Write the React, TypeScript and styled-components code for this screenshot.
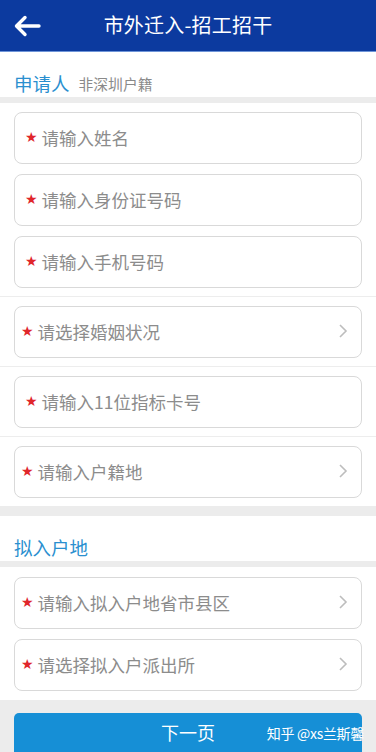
import React from 'react'
import styled, { createGlobalStyle } from 'styled-components'

const GlobalStyle = createGlobalStyle`
  html, body {
    margin: 0;
    padding: 0;
    background: #ffffff;
  }
  body {
    font-family: "Noto Sans CJK SC", "Noto Sans", sans-serif;
  }
`

const Page = styled.div`
  width: 376px;
  height: 752px;
  overflow: hidden;
  display: flex;
  flex-direction: column;
  background: #ffffff;
`

const Header = styled.header`
  position: relative;
  height: 51px;
  flex-shrink: 0;
  display: flex;
  align-items: center;
  justify-content: center;
  background: #0c3a9f;
  border-bottom: 1px solid #6f95d8;
`

const BackButton = styled.button`
  position: absolute;
  left: 12px;
  top: 12px;
  width: 30px;
  height: 28px;
  padding: 0;
  border: 0;
  background: none;
  display: flex;
  align-items: center;
  justify-content: center;
`

const Title = styled.h1`
  margin: 0 0 2px;
  color: #ffffff;
  font-size: 20px;
  font-weight: normal;
  letter-spacing: 0.2px;
`

const SectionTitle = styled.div`
  height: 45px;
  box-sizing: border-box;
  padding: 17px 14px 0;
  display: flex;
  align-items: center;
  gap: 9px;
`

const SectionName = styled.span`
  color: #2a8fcf;
  font-size: 18.5px;
`

const SectionNote = styled.span`
  color: #8a8a8a;
  font-size: 14.8px;
`

const Band = styled.div<{ $h: number }>`
  height: ${(p) => p.$h}px;
  flex-shrink: 0;
  background: #ececec;
`

const Group = styled.div<{ $top: number; $bottom: number; $line?: boolean }>`
  display: flex;
  flex-direction: column;
  gap: 10px;
  padding: ${(p) => p.$top}px 14px ${(p) => p.$bottom}px;
  border-bottom: ${(p) => (p.$line ? '1px solid #ededed' : 'none')};
`

const Field = styled.div<{ $select?: boolean }>`
  height: 52px;
  box-sizing: border-box;
  border: 1px solid #d9d9d9;
  border-radius: 8px;
  display: flex;
  align-items: center;
  padding: 0 13px 2px ${(p) => (p.$select ? '6px' : '10px')};
  background: #ffffff;
`

const Star = styled.span`
  color: #e0262b;
  font-size: 14px;
  line-height: 1;
  margin-right: 4px;
  font-family: "DejaVu Sans", sans-serif;
`

const Placeholder = styled.span`
  flex: 1;
  color: #8c8c8c;
  font-size: 17.5px;
`

const Footer = styled.div`
  flex: 1;
  background: #ececec;
  padding: 13px 14px 0;
  display: flex;
`

const NextButton = styled.button`
  position: relative;
  flex: 1;
  border: 0;
  border-radius: 5px 5px 0 0;
  background: #168fd6;
  color: #ffffff;
  font-family: inherit;
  font-size: 18px;
  padding: 0 0 2px;
`

const Watermark = styled.span`
  position: absolute;
  right: -2px;
  top: 10px;
  font-size: 14px;
  color: #ffffff;
  letter-spacing: -0.3px;
`

const Chevron = () => (
  <svg width="10" height="16" viewBox="0 0 10 16">
    <path d="M2 2 L8 8 L2 14" fill="none" stroke="#bdbdbd" strokeWidth="1.6" />
  </svg>
)

const BackArrow = () => (
  <svg width="28" height="22" viewBox="0 0 28 22">
    <path
      d="M26 11 H4 M12 2.5 L3.5 11 L12 19.5"
      fill="none"
      stroke="#ffffff"
      strokeWidth="3.4"
      strokeLinecap="round"
      strokeLinejoin="round"
    />
  </svg>
)

interface FieldProps {
  text: string
  select?: boolean
}

const FormField = ({ text, select }: FieldProps) => (
  <Field $select={select}>
    <Star>★</Star>
    <Placeholder>{text}</Placeholder>
    {select && <Chevron />}
  </Field>
)

const App = () => (
  <Page>
    <GlobalStyle />
    <Header>
      <BackButton aria-label="返回">
        <BackArrow />
      </BackButton>
      <Title>市外迁入-招工招干</Title>
    </Header>

    <SectionTitle>
      <SectionName>申请人</SectionName>
      <SectionNote>非深圳户籍</SectionNote>
    </SectionTitle>
    <Band $h={6} />

    <Group $top={9} $bottom={8} $line>
      <FormField text="请输入姓名" />
      <FormField text="请输入身份证号码" />
      <FormField text="请输入手机号码" />
    </Group>
    <Group $top={9} $bottom={8} $line>
      <FormField text="请选择婚姻状况" select />
    </Group>
    <Group $top={9} $bottom={8} $line>
      <FormField text="请输入11位指标卡号" />
    </Group>
    <Group $top={9} $bottom={8}>
      <FormField text="请输入户籍地" select />
    </Group>
    <Band $h={10} />

    <SectionTitle>
      <SectionName>拟入户地</SectionName>
    </SectionTitle>
    <Band $h={6} />

    <Group $top={10} $bottom={9}>
      <FormField text="请输入拟入户地省市县区" select />
      <FormField text="请选择拟入户派出所" select />
    </Group>

    <Footer>
      <NextButton>
        下一页
        <Watermark>知乎 @xs兰斯馨</Watermark>
      </NextButton>
    </Footer>
  </Page>
)

export default App
